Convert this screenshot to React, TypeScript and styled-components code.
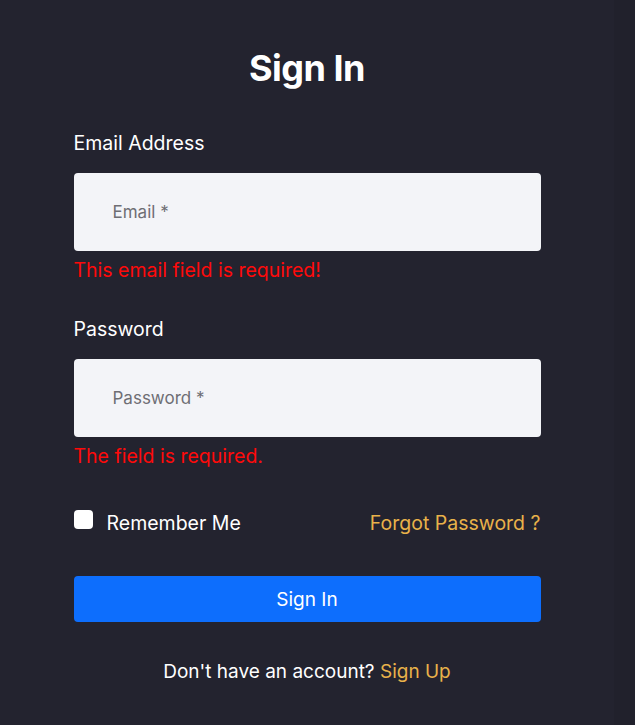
import React, { useState } from 'react'
import styled, { createGlobalStyle } from 'styled-components'

const Global = createGlobalStyle`
  html, body {
    margin: 0;
    padding: 0;
    background: #22222f;
  }
  * {
    box-sizing: border-box;
  }
`

const SignIn = () => {
  const [remember, setRemember] = useState(false)

  return (<S.Page>
    <S.Main>
      <S.Form onSubmit={e => e.preventDefault()}>
        <S.Title>Sign In</S.Title>

        <S.Label htmlFor='email'>Email Address</S.Label>
        <S.Input id='email' type='email' placeholder='Email *' />
        <S.Error>This email field is required!</S.Error>

        <S.Label htmlFor='password' spaced>Password</S.Label>
        <S.Input id='password' type='password' placeholder='Password *' />
        <S.Error>The field is required.</S.Error>

        <S.Row>
          <S.Remember>
            <S.Check type='checkbox' checked={remember} onChange={() => setRemember(!remember)} />
            Remember Me
          </S.Remember>
          <S.Accent href='#'>Forgot Password ?</S.Accent>
        </S.Row>

        <S.Submit type='submit'>Sign In</S.Submit>

        <S.Footer>
          Don't have an account? <S.Accent href='#'>Sign Up</S.Accent>
        </S.Footer>
      </S.Form>
    </S.Main>
    <S.Edge />
  </S.Page>)
}

export default function App() {
  return (<>
    <Global />
    <SignIn />
  </>)
}

const S = {
  Page: styled.div`
    display: flex;
    min-height: 725px;
    background: #23232f;
    font-family: Inter, 'Noto Sans', sans-serif;
    color: #ffffff;
  `,
  Main: styled.div`
    width: 614px;
    flex-shrink: 0;
    padding-top: 46px;
  `,
  Edge: styled.div`
    flex: 1;
    background: #21212c;
  `,
  Form: styled.form`
    width: 467px;
    margin: 0 auto;
    display: flex;
    flex-direction: column;
  `,
  Title: styled.h1`
    margin: 0 0 40px;
    font-size: 36px;
    line-height: 44px;
    font-weight: 700;
    text-align: center;
    letter-spacing: -0.5px;
  `,
  Label: styled.label<{ spaced?: boolean }>`
    display: block;
    margin-top: ${props => props.spaced ? '32px' : '0'};
    margin-bottom: 16px;
    font-size: 19.5px;
    line-height: 27px;
    font-weight: 400;
  `,
  Input: styled.input`
    height: 78px;
    width: 100%;
    border: none;
    border-radius: 4px;
    background: #f3f4f8;
    padding: 0 39px;
    font-family: inherit;
    font-size: 17px;
    color: #333;
    outline: none;
    &::placeholder {
      color: #6e6e74;
    }
  `,
  Error: styled.div`
    margin-top: 6px;
    font-size: 19.5px;
    line-height: 27px;
    color: #ff0a0a;
  `,
  Row: styled.div`
    margin-top: 40px;
    display: flex;
    justify-content: space-between;
    align-items: center;
    font-size: 19.5px;
    line-height: 27px;
  `,
  Remember: styled.label`
    display: flex;
    align-items: center;
    gap: 14px;
  `,
  Check: styled.input`
    appearance: none;
    margin: 0;
    width: 19px;
    height: 19px;
    border-radius: 4px;
    background: #ffffff;
    position: relative;
    top: -4px;
  `,
  Accent: styled.a`
    color: #e9b24a;
    text-decoration: none;
  `,
  Submit: styled.button`
    margin-top: 39px;
    height: 46px;
    width: 100%;
    border: none;
    border-radius: 4px;
    background: #0d6efd;
    color: #ffffff;
    font-family: inherit;
    font-size: 19px;
    cursor: pointer;
  `,
  Footer: styled.div`
    margin-top: 36px;
    text-align: center;
    font-size: 19px;
    line-height: 27px;
  `
}
